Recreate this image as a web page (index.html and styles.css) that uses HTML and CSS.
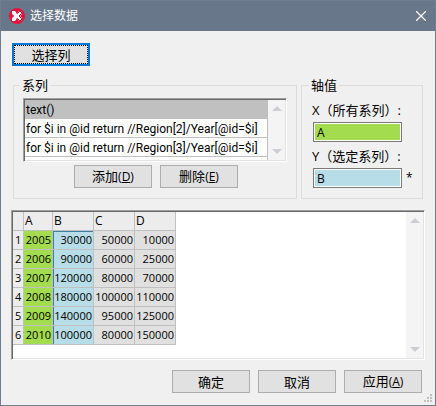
FILE: index.html
```html
<!DOCTYPE html>
<html lang="zh-CN">
<head>
  <meta charset="UTF-8">
  <meta name="viewport" content="width=device-width, initial-scale=1.0">
  <title>选择数据</title>
  <link rel="stylesheet" href="styles.css">
</head>
<body>

  <div class="window">
    <header class="titlebar">
      <svg class="app-icon" width="16" height="16" viewBox="0 0 16 16">
        <circle cx="8" cy="8" r="8" fill="#e8133d"/>
        <path d="M3 3h3l2 3 2-3h3v3l-2 2 2 2v3h-3l-2-3-2 3H3v-3l2-2-2-2z" fill="#fff"/>
        <path d="M8.500 5.500L10.500 3.500H12.500V5.500L10 8l2.500 2.500V12.500H10.500L8.500 10.500" fill="none" stroke="#a80f38" stroke-width="1"/>
        <path d="M3 6.500L5 8 3 9.500z" fill="#e8133d"/>
      </svg>
      <h1>选择数据</h1>
      <button class="close" aria-label="关闭">
        <svg width="10" height="10" viewBox="0 0 10 10">
          <path d="M0 0L10 10M10 0L0 10" stroke="#fff" stroke-width="1.300"/>
        </svg>
      </button>
    </header>

    <main class="content">
      <button class="btn focused">选择列</button>

      <div class="groups">
        <fieldset class="group series">
          <legend>系列</legend>
          <div class="sunken">
            <ul class="list">
              <li class="selected">text()</li>
              <li>for $i in @id return //Region[2]/Year[@id=$i]</li>
              <li>for $i in @id return //Region[3]/Year[@id=$i]</li>
            </ul>
            <div class="scrollbar">
              <span class="up"></span>
              <span class="down"></span>
            </div>
          </div>
          <div class="series-buttons">
            <button class="btn">添加<small>(<u>D</u>)</small></button>
            <button class="btn">删除<small>(<u>E</u>)</small></button>
          </div>
        </fieldset>

        <fieldset class="group axis">
          <legend>轴值</legend>
          <label for="axisX">X（所有系列）:</label>
          <div class="field">
            <input type="text" id="axisX" class="green" value="A">
          </div>
          <label for="axisY">Y（选定系列）:</label>
          <div class="field">
            <input type="text" id="axisY" class="blue" value="B">
            <span>*</span>
          </div>
        </fieldset>
      </div>

      <div class="sunken data">
        <div class="sheet">
          <table>
            <thead>
              <tr><th class="num"></th><th class="col-a">A</th><th>B</th><th>C</th><th>D</th></tr>
            </thead>
            <tbody>
              <tr><th>1</th><td class="green">2005</td><td class="blue">30000</td><td>50000</td><td>10000</td></tr>
              <tr><th>2</th><td class="green">2006</td><td class="blue">90000</td><td>60000</td><td>25000</td></tr>
              <tr><th>3</th><td class="green">2007</td><td class="blue">120000</td><td>80000</td><td>70000</td></tr>
              <tr><th>4</th><td class="green">2008</td><td class="blue">180000</td><td>100000</td><td>110000</td></tr>
              <tr><th>5</th><td class="green">2009</td><td class="blue">140000</td><td>95000</td><td>125000</td></tr>
              <tr><th>6</th><td class="green">2010</td><td class="blue">100000</td><td>80000</td><td>150000</td></tr>
            </tbody>
          </table>
        </div>
        <div class="scrollbar">
          <span class="up"></span>
          <span class="down"></span>
        </div>
      </div>

      <div class="dialog-buttons">
        <button class="btn">确定</button>
        <button class="btn">取消</button>
        <button class="btn">应用<small>(<u>A</u>)</small></button>
      </div>
    </main>

    <svg class="grip" width="8" height="8" viewBox="0 0 8 8">
      <path d="M6 0h2v2H6zM3 3h2v2H3zM6 3h2v2H6zM0 6h2v2H0zM3 6h2v2H3zM6 6h2v2H6z" fill="#bfbfbf"/>
    </svg>
  </div>

</body>
</html>
```

FILE: styles.css
```css
* {
  box-sizing: border-box;
}
body {
  margin: 0;
  font-family: 'Open Sans', 'Noto Sans CJK SC', sans-serif;
  font-size: 12px;
  line-height: 18px;
  color: #000;
}
button, input {
  font: inherit;
  color: inherit;
}
.window {
  position: relative;
  min-height: 100vh;
  background: #f0f0f0;
  border: 1px solid #6f7d90;
}

/* title bar */
.titlebar {
  display: flex;
  align-items: center;
  height: 30px;
  padding: 0 9px 0 8px;
  background: #68778a;
  color: #fff;
}
.titlebar h1 {
  flex: 1;
  margin: 0 0 0 5px;
  font-size: 12px;
  font-weight: normal;
}
.close {
  display: flex;
  padding: 0;
  background: none;
  border: none;
}

.content {
  padding: 12px 10px;
}

/* buttons */
.btn {
  width: 78px;
  height: 23px;
  padding: 0;
  font-size: 13px;
  line-height: 20px;
  background: #e1e1e1;
  border: 1px solid #adadad;
}
.btn small {
  font-size: 12px;
}
.btn.focused {
  display: block;
  margin-left: 1px;
  border: 2px solid #0078d7;
  outline: 1px dotted #000;
  outline-offset: -3px;
  line-height: 18px;
}

/* group boxes */
.groups {
  display: flex;
  gap: 4px;
  margin: 10px 2px 0;
}
.group {
  min-width: 0;
  height: 123px;
  margin: 0;
  border: 1px solid #dcdcdc;
}
.series {
  flex: 1;
  padding: 0 9px;
}
.axis {
  width: 122px;
  padding: 2px 10px 0;
}
legend {
  margin-left: -3px;
  padding: 0 2px;
  font-size: 13px;
}

/* sunken frames with a scrollbar */
.sunken {
  display: flex;
  padding: 1px;
  border: 1px solid;
  border-color: #a0a0a0 #fff #fff #a0a0a0;
  box-shadow: inset 1px 1px #696969, inset -1px -1px #e3e3e3;
  background: #fff;
}
.series .sunken {
  margin-top: 4px;
  height: 64px;
}
.list {
  flex: 1;
  min-width: 0;
  margin: 0;
  padding: 0;
  list-style: none;
  overflow: hidden;
  font-family: Roboto, sans-serif;
  white-space: nowrap;
  border-right: 1px solid #c0c0c0;
}
.list li {
  height: 19px;
  padding-left: 1px;
  line-height: 20px;
  border-bottom: 1px solid #c0c0c0;
}
.list .selected {
  background: #c0c0c0;
}
.scrollbar {
  display: flex;
  flex-direction: column;
  justify-content: space-between;
  align-items: center;
  width: 17px;
  padding: 6px 0;
  background: #f4f4f4;
}
.up, .down {
  border: 5px solid transparent;
}
.up {
  border-top: 0;
  border-bottom-color: #cdcdd5;
}
.down {
  border-bottom: 0;
  border-top-color: #cdcdd5;
}
.series-buttons {
  display: flex;
  justify-content: center;
  gap: 8px;
  margin-top: 3px;
  padding-left: 2px;
}

/* axis fields */
.axis label {
  display: block;
  margin-top: 3px;
  font-size: 13px;
  line-height: 22px;
  white-space: nowrap;
}
.field {
  display: flex;
  align-items: center;
  gap: 4px;
  margin: 1px 0 0 1px;
}
.field input {
  width: 89px;
  height: 20px;
  padding: 0 3px;
  border: 1px solid #7a7a7a;
  border-radius: 0;
  box-shadow: inset 0 0 0 1px #fff;
}
.green {
  background: #a3dc4e;
}
.blue {
  background: #b7dde8;
}

/* data sheet */
.data {
  height: 150px;
  margin-top: 11px;
}
.sheet {
  flex: 1;
  overflow: hidden;
}
table {
  table-layout: fixed;
  width: 163px;
  border-collapse: separate;
  border-spacing: 0;
  font-size: 11px;
}
th, td {
  height: 19px;
  padding: 0 1px;
  font-weight: normal;
  line-height: 18px;
  border-right: 1px solid #c0c0c0;
  border-bottom: 1px solid #c0c0c0;
}
th {
  text-align: left;
  background: #ececec;
}
td {
  text-align: right;
  background: #e0e0e0;
}
td.green {
  background: #a3dc4e;
}
td.blue {
  background: #b7dde8;
  box-shadow: inset 1px 0 #3c7fa0;
}
tr:first-child td.blue {
  box-shadow: inset 1px 1px #3c7fa0;
}
tbody th {
  padding-left: 2px;
}
thead th {
  font-size: 12px;
}
.num {
  width: 11px;
}
.col-a {
  width: 29px;
}

.dialog-buttons {
  display: flex;
  justify-content: flex-end;
  gap: 8px;
  margin: 10px 3px 0 0;
}
.grip {
  position: absolute;
  right: 3px;
  bottom: 3px;
}
```
